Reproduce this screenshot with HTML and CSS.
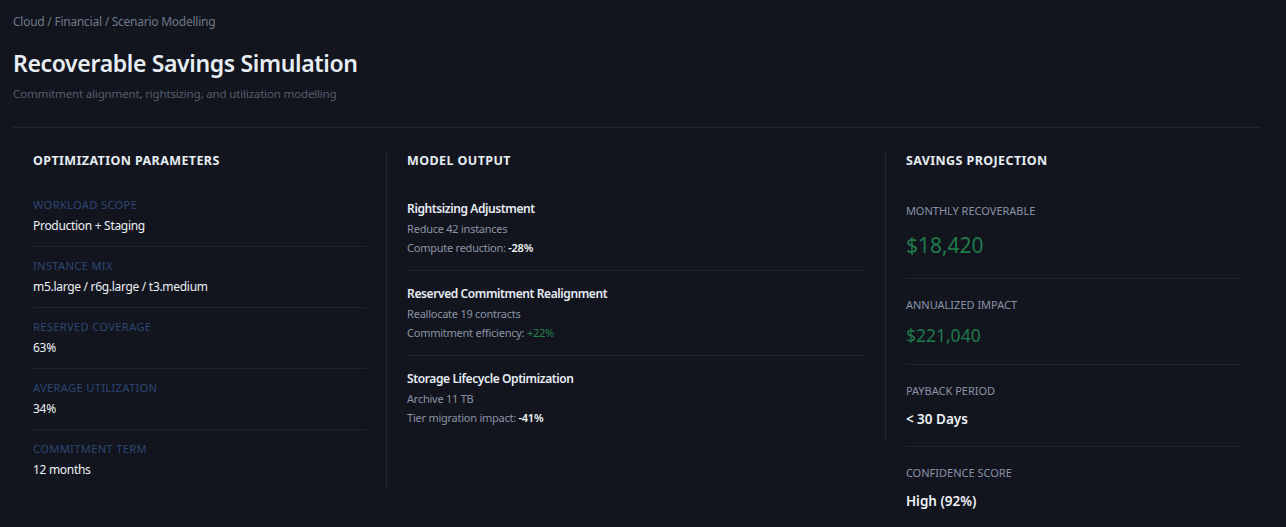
FILE: index.html
```html
<!DOCTYPE html>
<html lang="en">
<head>
<meta charset="utf-8">
<title>Recoverable Savings Simulation</title>
<link rel="stylesheet" href="styles.css">
</head>
<body>
<header class="page-header">
  <div class="breadcrumb">Cloud / Financial / Scenario Modelling</div>
  <h1 class="title">Recoverable Savings Simulation</h1>
  <p class="subtitle">Commitment alignment, rightsizing, and utilization modelling</p>
</header>
<main class="grid">
  <section class="col col-params">
    <h2 class="col-title">Optimization Parameters</h2>
    <div class="param">
      <div class="param-label">Workload Scope</div>
      <div class="param-value">Production + Staging</div>
    </div>
    <div class="param">
      <div class="param-label">Instance Mix</div>
      <div class="param-value">m5.large / r6g.large / t3.medium</div>
    </div>
    <div class="param">
      <div class="param-label">Reserved Coverage</div>
      <div class="param-value">63%</div>
    </div>
    <div class="param">
      <div class="param-label">Average Utilization</div>
      <div class="param-value">34%</div>
    </div>
    <div class="param">
      <div class="param-label">Commitment Term</div>
      <div class="param-value">12 months</div>
    </div>
  </section>
  <section class="col col-output">
    <h2 class="col-title">Model Output</h2>
    <div class="output">
      <div class="output-title">Rightsizing Adjustment</div>
      <div class="output-line">Reduce 42 instances</div>
      <div class="output-line">Compute reduction: <span class="strong">-28%</span></div>
    </div>
    <div class="output">
      <div class="output-title">Reserved Commitment Realignment</div>
      <div class="output-line">Reallocate 19 contracts</div>
      <div class="output-line">Commitment efficiency: <span class="positive">+22%</span></div>
    </div>
    <div class="output">
      <div class="output-title">Storage Lifecycle Optimization</div>
      <div class="output-line">Archive 11 TB</div>
      <div class="output-line">Tier migration impact: <span class="strong">-41%</span></div>
    </div>
  </section>
  <section class="col col-projection">
    <h2 class="col-title">Savings Projection</h2>
    <div class="metric">
      <div class="metric-label">Monthly Recoverable</div>
      <div class="metric-value money money-lg">$18,420</div>
    </div>
    <div class="metric">
      <div class="metric-label">Annualized Impact</div>
      <div class="metric-value money money-md">$221,040</div>
    </div>
    <div class="metric">
      <div class="metric-label">Payback Period</div>
      <div class="metric-value plain">&lt; 30 Days</div>
    </div>
    <div class="metric">
      <div class="metric-label">Confidence Score</div>
      <div class="metric-value plain">High (92%)</div>
    </div>
  </section>
</main>
</body>
</html>
```
FILE: styles.css
```css
* { box-sizing: border-box; }
html, body { margin: 0; }
body {
  background: #12151e;
  color: #e6edf3;
  font-family: "Noto Sans", "Open Sans", sans-serif;
  padding: 14px 26px 0 13px;
  overflow: hidden;
}
.page-header {
  border-bottom: 1px solid #232733;
  padding-bottom: 25px;
}
.breadcrumb {
  font-size: 12px;
  line-height: 16px;
  letter-spacing: -0.25px;
  color: #6e7889;
}
.title {
  margin: 18px 0 0;
  font-size: 23px;
  line-height: 30px;
  font-weight: 600;
  letter-spacing: -0.35px;
  color: #e8eef6;
}
.subtitle {
  margin: 8px 0 0;
  font-size: 11.6px;
  line-height: 16px;
  letter-spacing: -0.2px;
  color: #535c6c;
}
.grid {
  display: grid;
  grid-template-columns: 3fr 4fr 3fr;
  align-items: start;
  margin-top: 24px;
}
.col {
  padding: 0 20px;
}
.col-params, .col-output {
  border-right: 1px solid #232733;
}
.col-title {
  margin: 0 0 16px;
  font-size: 12.5px;
  line-height: 18px;
  font-weight: 700;
  letter-spacing: 0.4px;
  text-transform: uppercase;
  color: #e6edf3;
}
.param {
  padding: 11px 0 12px;
  border-bottom: 1px solid #1f232d;
}
.param:last-child { border-bottom: 0; }
.param-label {
  font-size: 11.2px;
  line-height: 16px;
  letter-spacing: 0.3px;
  text-transform: uppercase;
  color: #2d4674;
}
.param-value {
  margin-top: 5px;
  font-size: 12px;
  line-height: 16px;
  letter-spacing: -0.3px;
  color: #eef2f7;
}
.output {
  padding: 14px 0;
  border-bottom: 1px solid #1f232d;
}
.output:last-child { border-bottom: 0; }
.output-title {
  font-size: 12px;
  line-height: 18px;
  font-weight: 600;
  letter-spacing: -0.4px;
  color: #e8eef6;
}
.output-line {
  margin-top: 3px;
  font-size: 11px;
  line-height: 16px;
  letter-spacing: -0.25px;
  color: #8a93a3;
}
.strong { color: #f1f5f9; font-weight: 600; }
.positive { color: #27804f; }
.metric {
  padding: 18px 0;
  border-bottom: 1px solid #1f232d;
}
.metric:first-of-type { padding-top: 17px; }
.metric:last-child { border-bottom: 0; }
.metric-label {
  font-size: 11px;
  line-height: 16px;
  text-transform: uppercase;
  color: #8a93a6;
}
.metric-value {
  margin-top: 12px;
  color: #eef2f7;
}
.money { color: #1f7a4b; }
.money-lg { font-size: 21px; line-height: 29px; }
.money-md { font-size: 17.5px; line-height: 21px; }
.plain { font-size: 13.5px; line-height: 17px; font-weight: 600; }
```
